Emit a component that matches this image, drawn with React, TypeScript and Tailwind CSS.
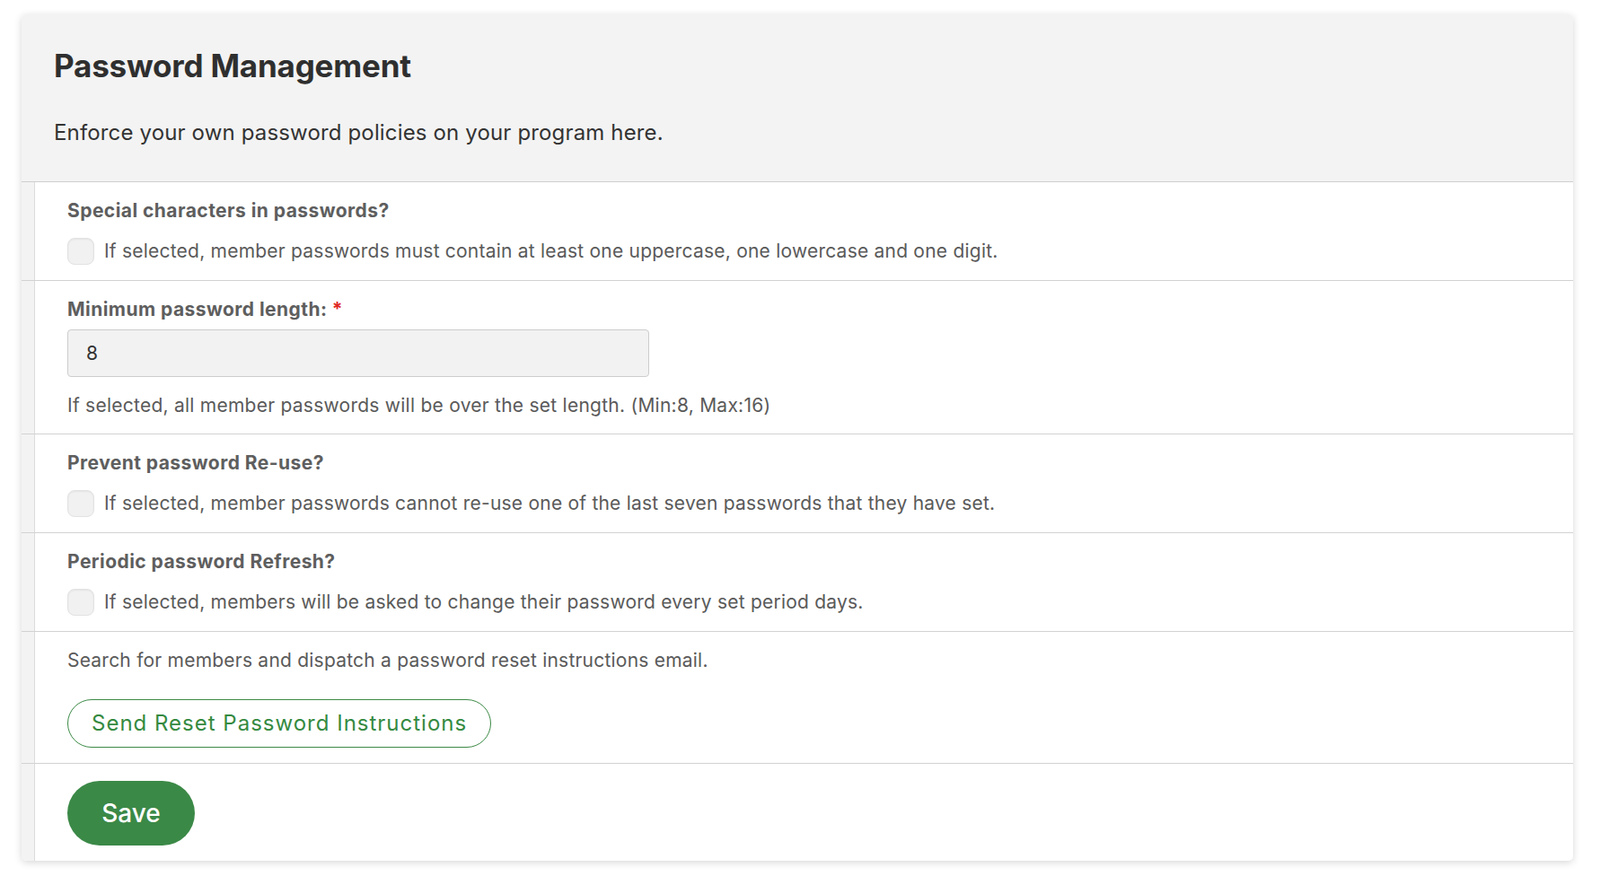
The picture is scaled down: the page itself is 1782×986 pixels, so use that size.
import React from 'react';

const Row = ({ children, last = false }: { children: React.ReactNode; last?: boolean }) => (
  <div className={`flex ${last ? '' : 'border-b border-[#d2d2d2]'}`}>
    <div className="w-[15px] shrink-0 bg-[#f3f3f3] border-r border-[#dcdcdc]" />
    <div className="flex-1 pl-[36px] pt-[18px] pb-[17px]">{children}</div>
  </div>
);

const Check = ({ text }: { text: string }) => (
  <label className="mt-[16px] flex items-center gap-[11px]">
    <span className="h-[30px] w-[30px] rounded-[8px] border border-[#e2e2e2] bg-[#f1f1f1] shadow-[inset_0_1px_2px_rgba(0,0,0,0.06)]" />
    <span className="text-[21px] leading-[28px] tracking-[0.22px] text-[#5a5a5a]">{text}</span>
  </label>
);

const Label = ({ children }: { children: React.ReactNode }) => (
  <div className="text-[21px] leading-[28px] font-bold tracking-[0.45px] text-[#5e5e5e]">{children}</div>
);

export default function App() {
  return (
    <div className="min-h-screen bg-white pl-[24px] pr-[30px] pt-[16px] font-['Inter',sans-serif]">
      <div className="overflow-hidden rounded-[5px] bg-white shadow-[0_2px_8px_rgba(0,0,0,0.16)]">
        <div className="bg-[#f3f3f3] pl-[36px] pt-[37px] pb-[38px] border-b border-[#cfcfcf]">
          <h1 className="text-[35px] leading-[40px] font-bold text-[#2f2f2f] tracking-[-0.2px]">Password Management</h1>
          <p className="mt-[39px] text-[24px] leading-[32px] tracking-[0.15px] text-[#333333]">
            Enforce your own password policies on your program here.
          </p>
        </div>

        <Row>
          <Label>Special characters in passwords?</Label>
          <Check text="If selected, member passwords must contain at least one uppercase, one lowercase and one digit." />
        </Row>

        <Row>
          <Label>
            Minimum password length: <span className="text-[#e0281f]">*</span>
          </Label>
          <input
            readOnly
            value="8"
            className="mt-[8px] block h-[53px] w-[648px] rounded-[4px] border border-[#cdcdcd] bg-[#f2f2f2] px-[20px] text-[21px] text-[#333] outline-none"
          />
          <p className="mt-[18px] text-[21px] leading-[28px] tracking-[0.25px] text-[#5a5a5a]">
            If selected, all member passwords will be over the set length. (Min:8, Max:16)
          </p>
        </Row>

        <Row>
          <Label>Prevent password Re-use?</Label>
          <Check text="If selected, member passwords cannot re-use one of the last seven passwords that they have set." />
        </Row>

        <Row>
          <Label>Periodic password Refresh?</Label>
          <Check text="If selected, members will be asked to change their password every set period days." />
        </Row>

        <Row>
          <p className="text-[21px] leading-[28px] tracking-[0.22px] text-[#5a5a5a]">
            Search for members and dispatch a password reset instructions email.
          </p>
          <button className="mt-[29px] h-[54px] rounded-full border border-[#3c8a46] bg-white px-[26px] text-[24px] tracking-[1px] text-[#358a41]">
            Send Reset Password Instructions
          </button>
        </Row>

        <Row last>
          <button className="mt-[1px] h-[72px] w-[142px] rounded-full bg-[#3b8947] text-[28px] font-medium text-white">
            Save
          </button>
        </Row>
      </div>
    </div>
  );
}
